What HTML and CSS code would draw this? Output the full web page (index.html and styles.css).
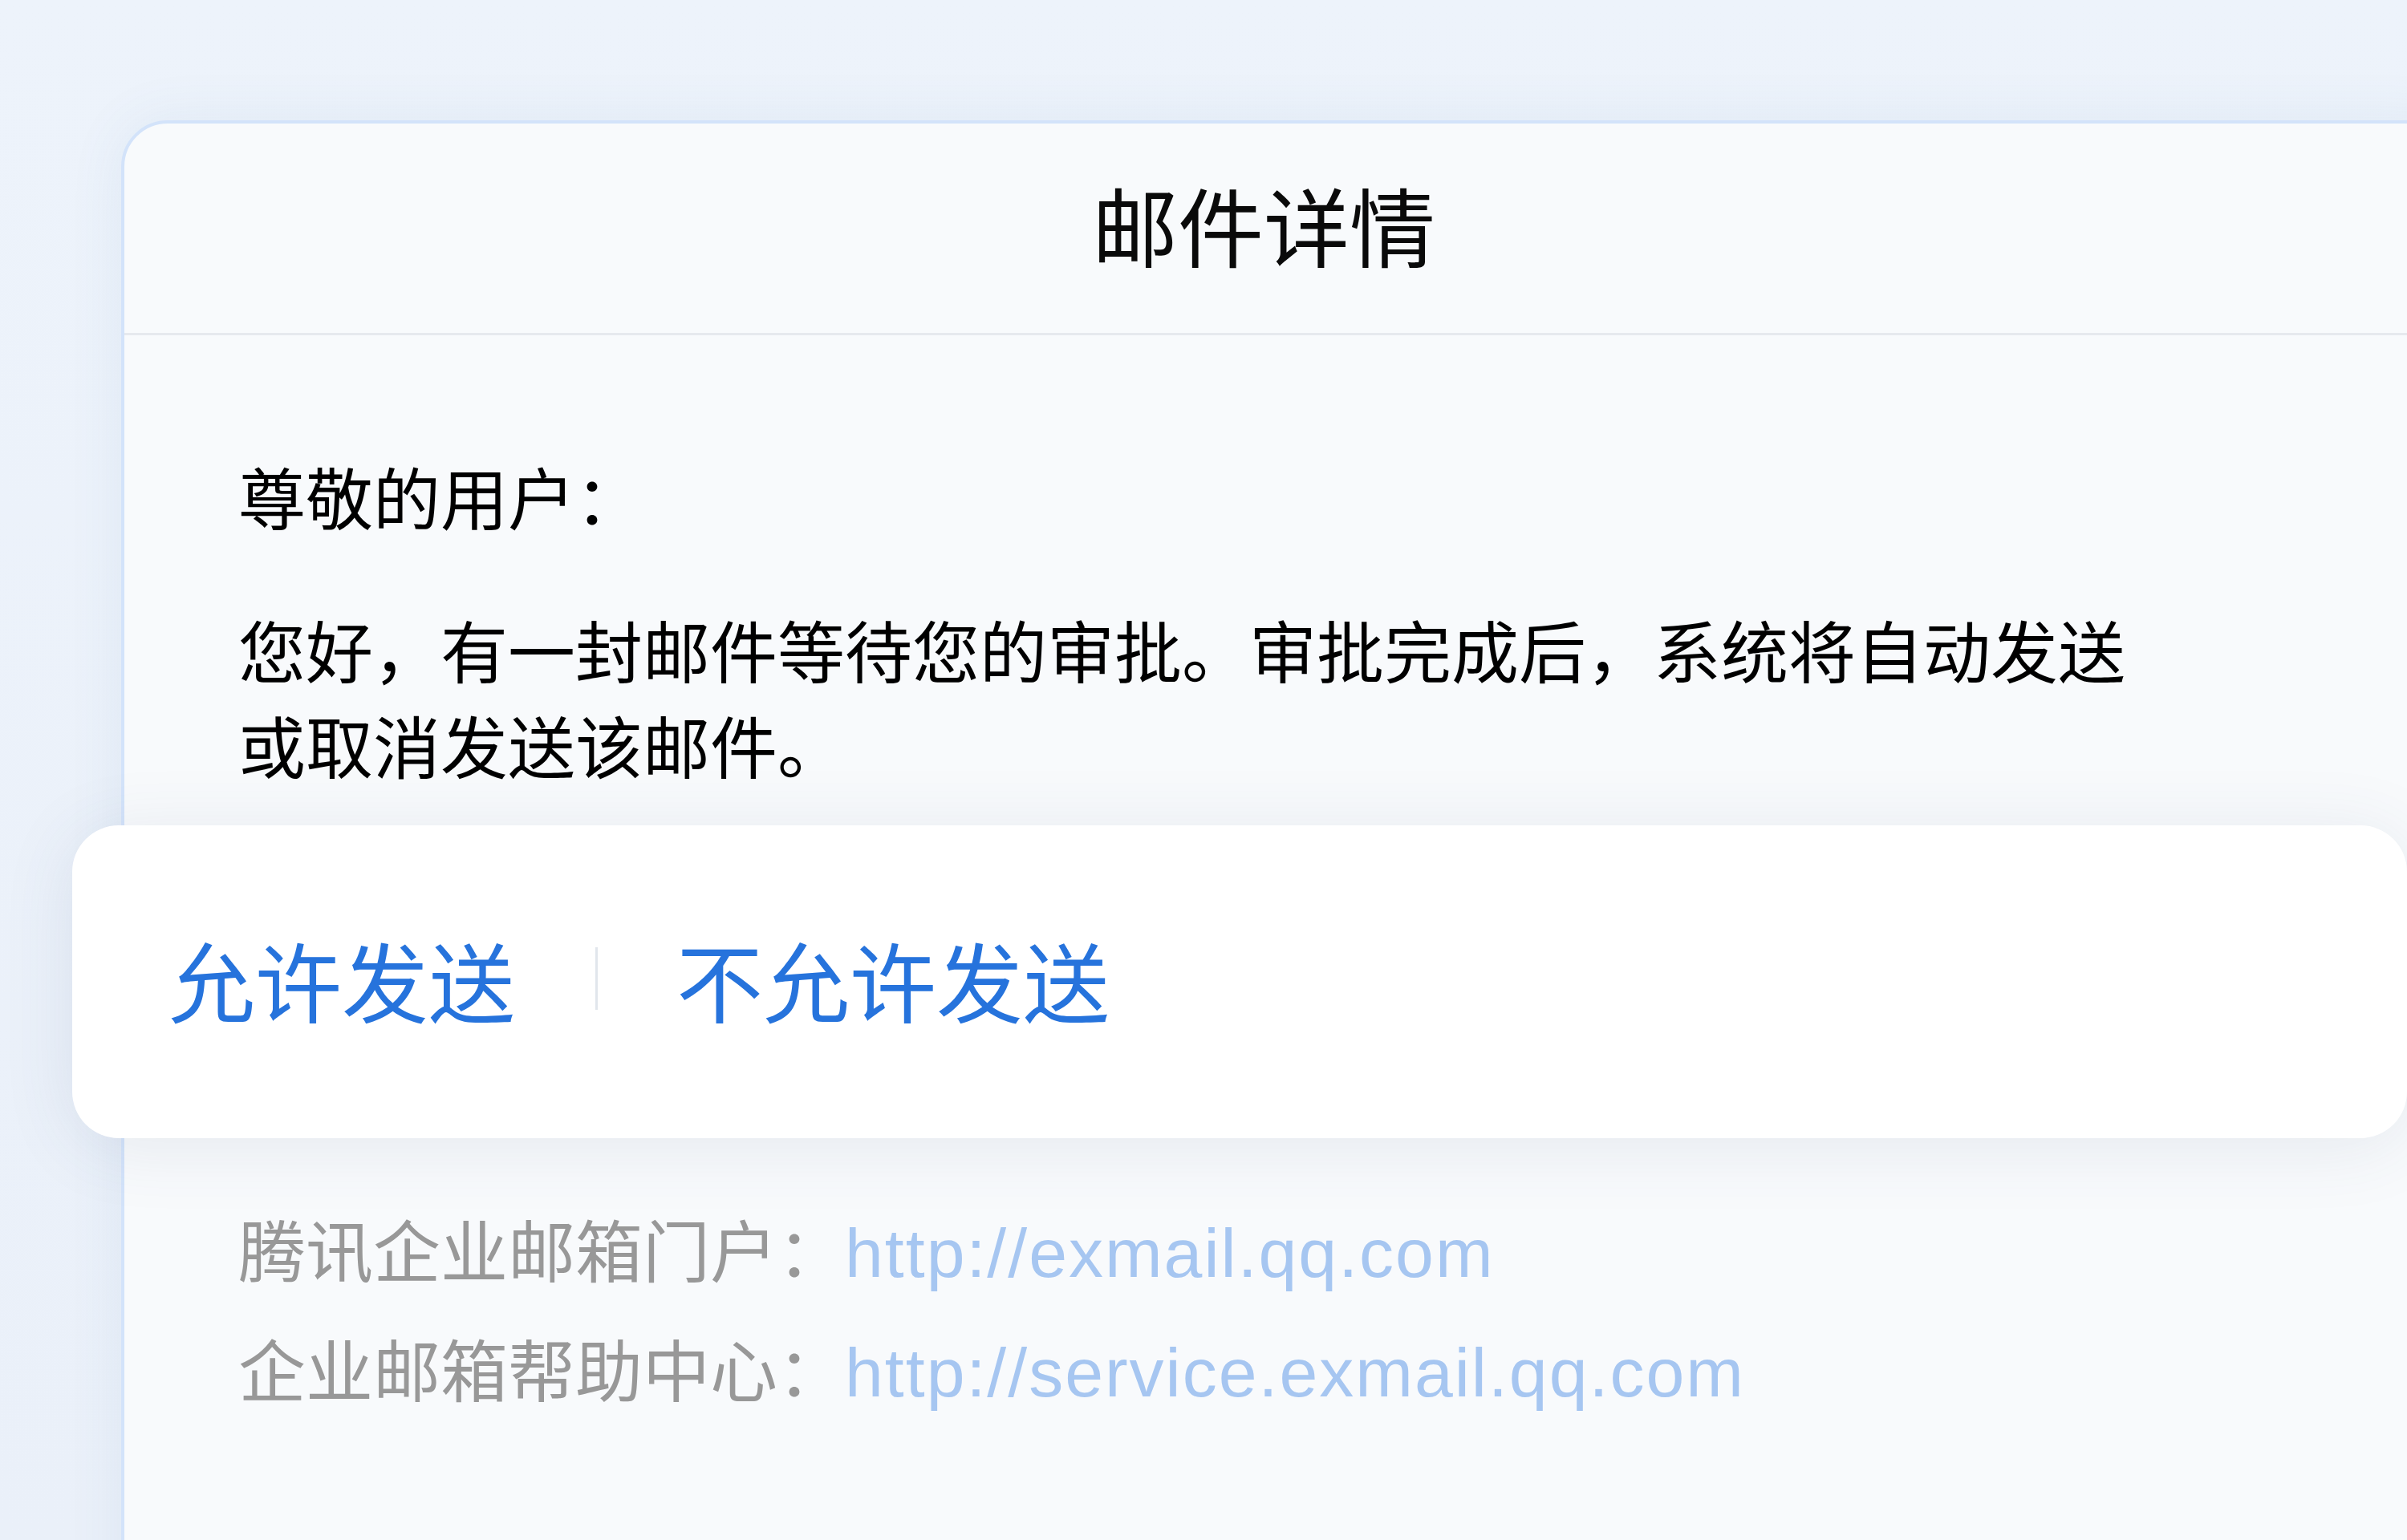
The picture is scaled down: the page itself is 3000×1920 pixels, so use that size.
FILE: index.html
```html
<!DOCTYPE html>
<html lang="zh-CN">
<head>
    <meta charset="UTF-8">
    <title>邮件详情</title>
    <link rel="stylesheet" href="styles.css">
</head>
<body>
    <div class="mail-card">
        <div class="mail-header">
            <h1 class="mail-title">邮件详情</h1>
        </div>
        <div class="mail-body">
            <p class="greeting">尊敬的用户：</p>
            <p class="message">您好，有一封邮件等待您的审批。审批完成后，系统将自动发送或取消发送该邮件。</p>

            <div class="mail-footer">
                <div class="footer-line">
                    <span class="footer-label">腾讯企业邮箱门户：</span><a class="footer-link" href="#">http://exmail.qq.com</a>
                </div>
                <div class="footer-line">
                    <span class="footer-label">企业邮箱帮助中心：</span><a class="footer-link" href="#">http://service.exmail.qq.com</a>
                </div>
            </div>
        </div>
    </div>

    <!-- 审批操作浮层 -->
    <div class="action-sheet">
        <button class="action-button">允许发送</button>
        <span class="action-divider"></span>
        <button class="action-button">不允许发送</button>
    </div>
</body>
</html>
```

FILE: styles.css
```css
html, body {
    margin: 0;
    padding: 0;
    width: 3000px;
    height: 1920px;
    overflow: hidden;
}

body {
    position: relative;
    font-family: "Noto Sans CJK SC", "Liberation Sans", sans-serif;
    background: linear-gradient(180deg, #edf3fb 0%, #eaf0f9 100%);
    color: #000;
}

/* 邮件卡片，右侧和底部超出画面 */
.mail-card {
    margin: 150px 0 0 151px;
    width: 2920px;
    height: 1900px;
    background-color: #f8fafc;
    border: 4px solid #d3e3fa;
    border-radius: 58px;
    box-shadow: 0 0 70px rgba(70, 110, 170, 0.08);
    box-sizing: border-box;
}

.mail-header {
    height: 264px;
    padding: 0 72px 12px 0;
    display: flex;
    align-items: center;
    justify-content: center;
    border-bottom: 3px solid #e6e9ee;
    box-sizing: border-box;
}

.mail-title {
    margin: 0;
    font-size: 107px;
    font-weight: 400;
    line-height: 1;
    color: #0a0a0a;
}

.mail-body {
    padding: 140px 0 0 142px;
    font-size: 84px;
    line-height: 119px;
}

.greeting {
    margin: 0;
}

.message {
    margin: 72px 0 0 0;
    width: 2390px;
}

.mail-footer {
    margin-top: 494px;
}

.footer-line {
    height: 149px;
    line-height: 149px;
    white-space: nowrap;
}

.footer-label {
    color: #989898;
}

.footer-link {
    font-family: "Liberation Sans", sans-serif;
    font-size: 86px;
    color: #a6c6f1;
    text-decoration: none;
    letter-spacing: 2px;
}

/* 浮层：允许 / 不允许发送 */
.action-sheet {
    position: absolute;
    left: 90px;
    top: 1029px;
    width: 2910px;
    height: 390px;
    background-color: #ffffff;
    border-radius: 58px;
    box-shadow: 0 10px 90px rgba(60, 80, 120, 0.10);
    display: flex;
    align-items: center;
    padding: 0 0 8px 120px;
    box-sizing: border-box;
}

.action-button {
    background: none;
    border: none;
    padding: 0;
    margin: 0;
    font-family: "Noto Sans CJK SC", sans-serif;
    font-size: 108px;
    line-height: 1;
    color: #2673dc;
    cursor: pointer;
}

.action-divider {
    width: 3px;
    height: 78px;
    background-color: #e1e6ec;
    margin: 0 98px 0 100px;
}
```
